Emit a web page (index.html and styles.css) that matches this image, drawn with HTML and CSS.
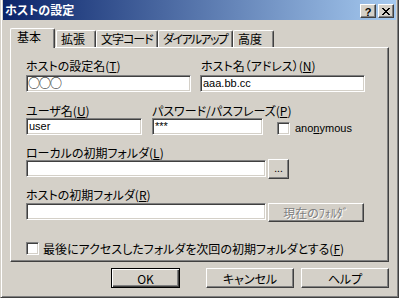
FILE: index.html
```html
<!DOCTYPE html>
<html lang="ja">
<head>
<meta charset="utf-8">
<title>ホストの設定</title>
<link rel="stylesheet" href="styles.css">
</head>
<body>
<div class="window">
  <div class="titlebar">
    <span class="title">ホストの設定</span>
    <div class="tb-buttons">
      <span class="tb-btn tb-help">?</span>
      <span class="tb-btn tb-close"><svg width="8" height="7" viewBox="0 0 8 7"><path d="M0 0h2v1h1v1h2V1h1V0h2v1H7v1H6v1H5v1h1v1h1v1h1v1H6V6H5V5H3v1H2v1H0V6h1V5h1V4h1V3H2V2H1V1H0z" fill="#000"/></svg></span>
    </div>
  </div>
  <div class="body">
    <div class="tabs">
      <div class="tab active tab-kihon">基本</div>
      <div class="tab tab-kakucho">拡張</div>
      <div class="tab tab-moji">文字コード</div>
      <div class="tab tab-dial">ダイアルアップ</div>
      <div class="tab tab-kodo">高度</div>
    </div>
    <div class="panel">
      <div class="row row1">
        <div class="field w-name">
          <div class="label">ホストの設定名(<u>T</u>)</div>
          <div class="edit circles">○○○</div>
        </div>
        <div class="field w-host">
          <div class="label">ホスト名（アドレス）(<u>N</u>)</div>
          <div class="edit latin">aaa.bb.cc</div>
        </div>
      </div>
      <div class="row row2">
        <div class="field w-user">
          <div class="label">ユーザ名(<u>U</u>)</div>
          <div class="edit latin">user</div>
        </div>
        <div class="field w-pass">
          <div class="label">パスワード/パスフレーズ(<u>P</u>)</div>
          <div class="edit latin">***</div>
        </div>
        <div class="check anon">
          <span class="box"></span>
          <span class="check-text">ano<u>n</u>ymous</span>
        </div>
      </div>
      <div class="row3">
        <div class="label">ローカルの初期フォルダ(<u>L</u>)</div>
        <div class="line">
          <div class="edit w-folder"></div>
          <div class="btn btn-browse">...</div>
        </div>
      </div>
      <div class="row4">
        <div class="label">ホストの初期フォルダ(<u>R</u>)</div>
        <div class="line">
          <div class="edit w-folder"></div>
          <div class="btn btn-current disabled">現在のﾌｫﾙﾀﾞ</div>
        </div>
      </div>
      <div class="check last">
        <span class="box"></span>
        <span class="check-text">最後にアクセスしたフォルダを次回の初期フォルダとする(<u>F</u>)</span>
      </div>
    </div>
    <div class="buttons">
      <div class="btn btn-default btn-ok">OK</div>
      <div class="btn btn-cancel">キャンセル</div>
      <div class="btn btn-help">ヘルプ</div>
    </div>
  </div>
</div>
</body>
</html>
```
FILE: styles.css
```css
* { box-sizing: border-box; }
html, body { margin: 0; padding: 0; background: #D4D0C8; }
body {
  font-family: "Noto Sans CJK JP", "Liberation Sans", sans-serif;
  font-size: 12px;
  font-feature-settings: "palt";
  color: #000;
}
u { text-decoration: underline; text-underline-offset: 1px; }

.window {
  width: 399px;
  height: 298px;
  background: #D4D0C8;
  border-left: 1px solid #D4D0C8;
  border-right: 1px solid #404040;
  border-bottom: 1px solid #404040;
  box-shadow: inset 1px 0 #fff, inset -1px -1px #808080;
  padding: 0 2px 2px 2px;
  display: flex;
  flex-direction: column;
}

.titlebar {
  height: 20px;
  background: linear-gradient(to right, #0A246A, #A6CAF0);
  display: flex;
  align-items: flex-start;
  justify-content: space-between;
}
.title {
  color: #fff;
  font-weight: bold;
  line-height: 20px;
  padding-left: 2px;
  font-size: 12px;
}
.tb-buttons {
  display: flex;
  gap: 2px;
  margin-top: 4px;
  margin-right: 2px;
}
.tb-btn {
  width: 16px;
  height: 14px;
  background: #D4D0C8;
  border: 1px solid;
  border-color: #fff #404040 #404040 #fff;
  box-shadow: inset -1px -1px #808080;
  display: flex;
  align-items: center;
  justify-content: center;
  font-family: "Liberation Sans", sans-serif;
  font-weight: bold;
  font-size: 11px;
  line-height: 12px;
}
.tb-help { padding-top: 1px; }
.tb-close svg { display: block; }

.body {
  padding: 0 7px;
  display: flex;
  flex-direction: column;
}

.tabs {
  margin-top: 8px;
  height: 19px;
  display: flex;
  align-items: flex-end;
}
.tab {
  height: 17px;
  background: #D4D0C8;
  border-left: 1px solid #fff;
  border-top: 1px solid #fff;
  border-right: 1px solid #404040;
  border-top-left-radius: 2px;
  border-top-right-radius: 2px;
  box-shadow: inset -1px 0 #808080;
  padding-left: 4px;
  line-height: 15px;
  white-space: nowrap;
  overflow: hidden;
}
.tab.active {
  height: 20px;
  margin-bottom: -1px;
  position: relative;
  z-index: 1;
  padding-left: 6px;
  line-height: 16px;
}
.tab-kihon { width: 45px; }
.tab-kakucho { width: 40px; margin-left: 1px; }
.tab-moji { width: 62px; letter-spacing: -1px; }
.tab-dial { width: 75px; letter-spacing: -1.6px; }
.tab-kodo { width: 41px; }

.panel {
  height: 215px;
  border: 1px solid;
  border-color: #fff #404040 #404040 #fff;
  box-shadow: inset -1px -1px #808080;
  padding-left: 15px;
  display: flex;
  flex-direction: column;
}

.label {
  line-height: 15px;
  height: 15px;
  white-space: nowrap;
}

.edit {
  height: 17px;
  background: #fff;
  border: 1px solid;
  border-color: #808080 #fff #fff #808080;
  box-shadow: inset 1px 1px #404040, inset -1px -1px #D4D0C8;
  padding: 0 2px;
  line-height: 14px;
  white-space: nowrap;
  overflow: hidden;
}
.edit.latin {
  font-family: "Liberation Sans", sans-serif;
  font-size: 11px;
  line-height: 15px;
  padding-left: 2px;
}
.edit.circles {
  font-size: 12px;
  line-height: 14px;
  font-feature-settings: normal;
  letter-spacing: -1px;
  padding-left: 1px;
}

.row { display: flex; align-items: flex-start; }
.row1 { margin-top: 10px; gap: 9px; }
.row1 .edit { margin-top: 2px; }
.w-name { width: 165px; }
.w-host { width: 165px; }
.w-host .label { padding-left: 1px; }

.row2 { margin-top: 11px; }
.w-user { width: 116px; }
.w-pass { width: 111px; margin-left: 10px; }

.check { display: flex; align-items: center; }
.box {
  width: 13px;
  height: 13px;
  background: #fff;
  border: 1px solid;
  border-color: #808080 #fff #fff #808080;
  box-shadow: inset 1px 1px #404040, inset -1px -1px #D4D0C8;
  flex: none;
}
.anon { margin-left: 14px; margin-top: 19px; }
.anon .check-text { margin-left: 5px; font-family: "Liberation Sans", sans-serif; font-size: 11px; line-height: 13px; }

.row3 { margin-top: 10px; }
.row4 { margin-top: 8px; }
.row4 .line { margin-top: 1px; }
.line { display: flex; align-items: flex-start; gap: 2px; }
.w-folder { width: 240px; }

.btn {
  background: #D4D0C8;
  border: 1px solid;
  border-color: #fff #404040 #404040 #fff;
  box-shadow: inset -1px -1px #808080;
  display: flex;
  align-items: center;
  justify-content: center;
  white-space: nowrap;
}
.btn-browse { width: 21px; height: 20px; margin-top: -1px; font-size: 10px; line-height: 10px; padding-bottom: 3px; }
.btn-current { width: 96px; height: 19px; }
.disabled { color: #808080; text-shadow: 1px 1px #fff; }

.last { margin-top: 20px; }
.last .check-text { margin-left: 4px; line-height: 13px; }

.buttons {
  margin-top: 6px;
  display: flex;
  justify-content: flex-end;
  gap: 7px;
}
.buttons .btn { height: 20px; width: 88px; }
.btn-default.btn-ok {
  width: 69px;
  margin-right: 19px;
  border-color: #000;
  box-shadow: inset 1px 1px #fff, inset -1px -1px #404040, inset -2px -2px #808080;
}
```
